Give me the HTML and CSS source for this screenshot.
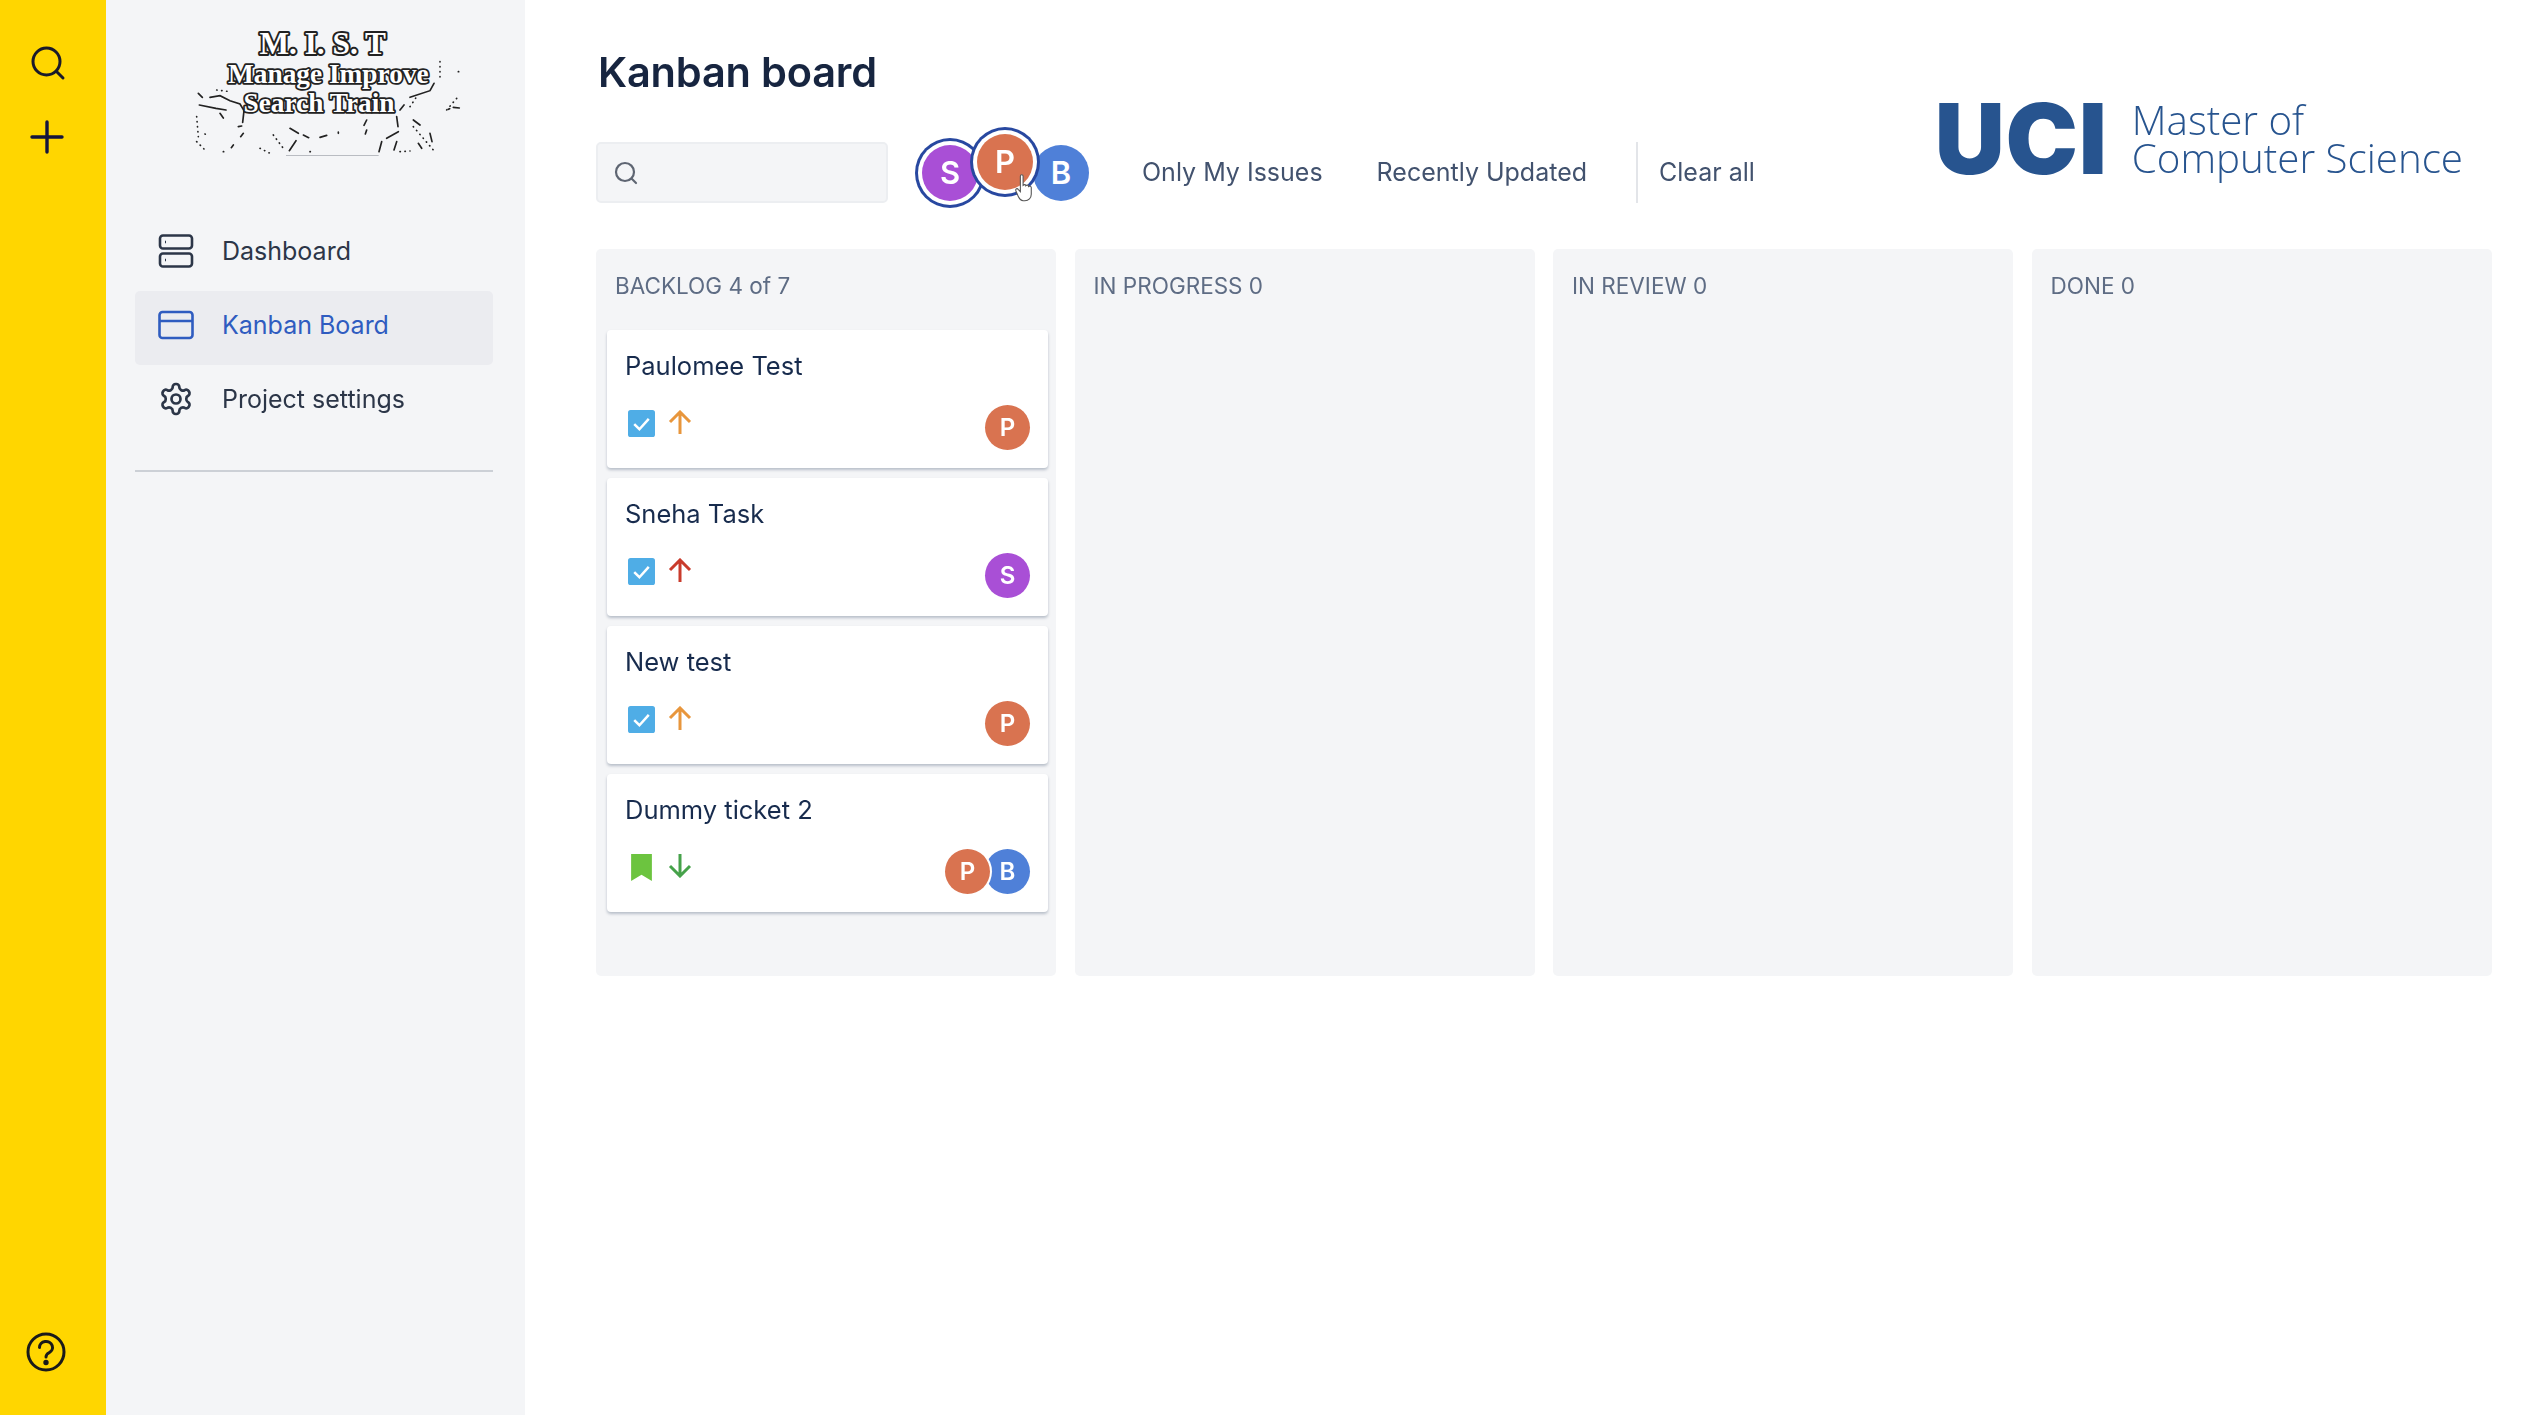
FILE: index.html
```html
<!DOCTYPE html>
<html lang="en">
<head>
<meta charset="utf-8">
<title>Kanban board</title>
<link rel="stylesheet" href="styles.css">
</head>
<body>
<div class="app">
  <aside class="rail">
    <div class="rail-top">
      <svg class="rail-icon" viewBox="0 0 36 36" fill="none" stroke="#1a1a2a" stroke-width="3" stroke-linecap="round"><circle cx="16.5" cy="16.5" r="13.5"/><path d="M27 27l6 6"/></svg>
      <svg class="rail-icon" viewBox="0 0 36 36" fill="none" stroke="#14143c" stroke-width="3.4" stroke-linecap="round"><path d="M17 3v30M2 18h30"/></svg>
    </div>
    <svg class="rail-help" viewBox="0 0 40 40" fill="none" stroke="#1a1a1a" stroke-width="3" stroke-linecap="round"><circle cx="20" cy="20" r="18"/><path d="M13.5 15.5a6.5 6 0 1 1 9.5 5.3c-2 1.1-3 2.2-3 4.2"/><circle cx="20" cy="30.5" r="1.2" fill="#1a1a1a"/></svg>
  </aside>

  <nav class="sidebar">
    <svg class="brand" viewBox="0 0 930 480">
      <g class="brand-specks" fill="none" stroke="#222" stroke-linecap="round">
        <path stroke-width="5" d="M85 250l12 12M88 285l50 10 30 5M120 262l30-5 30 15 30 10 12 20-4 35M150 310l10 14M205 350l10-2M220 370l-8 10M190 405l-6 8M360 355l25 15M378 392l-20 30M400 375l16 8M450 382l20-6M505 366v4M590 330l-8 16M590 360l-4 12M635 395l-8 30M650 385l35-20M680 320l4 30M690 300l12-15M720 262l60-20 12-22M730 330l20 15M780 370l6 25M745 400l10 15M680 395l-8 25M850 292l18 2M835 298l4-2"/>
        <path stroke-width="5" stroke-dasharray="1 14" d="M80 320l5 60M105 372l2 2M80 395l30 30M140 240l40 5M160 425h4M270 415l30 15M310 375l30 40M420 425h2M690 425l30-2M730 350l60 70M810 155v50M865 185h2M860 265l-30 35M720 290l20-30"/>
      </g>
      <rect class="brand-rule" x="348" y="435" width="278" height="3"/>
      <g class="brand-text">
        <text x="458" y="131" class="brand-l1">M. I. S. T</text>
        <text x="475" y="220" class="brand-l2">Manage Improve</text>
        <text x="447" y="305" class="brand-l2">Search Train</text>
      </g>
    </svg>
    <ul class="nav">
      <li class="nav-item">
        <svg class="nav-icon" viewBox="0 0 36 36" fill="none" stroke="currentColor" stroke-width="2.6"><rect x="2" y="2.5" width="32" height="13" rx="3"/><rect x="2" y="20.5" width="32" height="13" rx="3"/><path d="M7 9h1M7 27h1"/></svg>
        <span>Dashboard</span>
      </li>
      <li class="nav-item is-active">
        <svg class="nav-icon" viewBox="0 0 36 36" fill="none" stroke="currentColor" stroke-width="2.6"><rect x="1.5" y="5" width="33" height="26" rx="3"/><path d="M1.5 14h33"/></svg>
        <span>Kanban Board</span>
      </li>
      <li class="nav-item">
        <svg class="nav-icon" viewBox="0 0 24 24" fill="none" stroke="currentColor" stroke-width="1.8" stroke-linecap="round" stroke-linejoin="round"><path d="M12.22 2h-.44a2 2 0 0 0-2 2v.18a2 2 0 0 1-1 1.73l-.43.25a2 2 0 0 1-2 0l-.15-.08a2 2 0 0 0-2.73.73l-.22.38a2 2 0 0 0 .73 2.73l.15.1a2 2 0 0 1 1 1.72v.51a2 2 0 0 1-1 1.74l-.15.09a2 2 0 0 0-.73 2.73l.22.38a2 2 0 0 0 2.73.73l.15-.08a2 2 0 0 1 2 0l.43.25a2 2 0 0 1 1 1.73V20a2 2 0 0 0 2 2h.44a2 2 0 0 0 2-2v-.18a2 2 0 0 1 1-1.73l.43-.25a2 2 0 0 1 2 0l.15.08a2 2 0 0 0 2.73-.73l.22-.39a2 2 0 0 0-.73-2.73l-.15-.08a2 2 0 0 1-1-1.74v-.5a2 2 0 0 1 1-1.74l.15-.09a2 2 0 0 0 .73-2.73l-.22-.38a2 2 0 0 0-2.73-.73l-.15.08a2 2 0 0 1-2 0l-.43-.25a2 2 0 0 1-1-1.73V4a2 2 0 0 0-2-2z"/><circle cx="12" cy="12" r="3"/></svg>
        <span>Project settings</span>
      </li>
    </ul>
    <hr class="nav-rule">
  </nav>

  <main class="main">
    <header class="header">
      <div class="header-left">
        <h1 class="title">Kanban board</h1>
        <div class="toolbar">
          <div class="search">
            <svg class="search-icon" viewBox="0 0 26 26" fill="none" stroke="#5e6572" stroke-width="2.2" stroke-linecap="round"><circle cx="12" cy="12" r="9"/><path d="M19 19l4 4"/></svg>
          </div>
          <div class="people">
            <span class="person ring av-purple">S</span>
            <span class="person ring raised av-orange">P</span>
            <span class="person av-blue">B</span>
            <svg class="cursor" viewBox="0 0 22 32"><path d="M7 3c0-2 3-2 3 0v10c1-1 3-1 3 .5 1-1 3-1 3 .8 1-.8 3-.3 3 1.200V23c0 4-3 7-7 7h-2c-3 0-4-2-5-4l-3-7c-.6-2 1.500-3 2.600-1.500L7 20z" fill="#fff" stroke="#555" stroke-width="1.200"/></svg>
          </div>
          <button class="link">Only My Issues</button>
          <button class="link">Recently Updated</button>
          <span class="tool-rule"></span>
          <button class="link">Clear all</button>
        </div>
      </div>
      <div class="uci">
        <span class="uci-mark">UCI</span>
        <div class="uci-text"><div>Master of</div><div>Computer Science</div></div>
      </div>
    </header>

    <section class="board">
      <div class="col">
        <h2 class="col-title">BACKLOG 4 of 7</h2>
        <article class="card">
          <p class="card-title">Paulomee Test</p>
          <div class="card-foot">
            <div class="card-icons">
              <svg class="type" viewBox="0 0 26 26"><rect width="26" height="26" rx="2.500" fill="#4fade6"/><path d="M6 13.500l5 5 9-10" fill="none" stroke="#fff" stroke-width="2.400"/></svg>
              <svg class="prio" viewBox="0 0 24 24" fill="none" stroke="#e8963c" stroke-width="3"><path d="M12 24V2M2 12L12 2l10 10"/></svg>
            </div>
            <div class="assignees"><span class="av av-orange">P</span></div>
          </div>
        </article>
        <article class="card">
          <p class="card-title">Sneha Task</p>
          <div class="card-foot">
            <div class="card-icons">
              <svg class="type" viewBox="0 0 26 26"><rect width="26" height="26" rx="2.500" fill="#4fade6"/><path d="M6 13.500l5 5 9-10" fill="none" stroke="#fff" stroke-width="2.400"/></svg>
              <svg class="prio" viewBox="0 0 24 24" fill="none" stroke="#c93b2c" stroke-width="3"><path d="M12 24V2M2 12L12 2l10 10"/></svg>
            </div>
            <div class="assignees"><span class="av av-purple">S</span></div>
          </div>
        </article>
        <article class="card">
          <p class="card-title">New test</p>
          <div class="card-foot">
            <div class="card-icons">
              <svg class="type" viewBox="0 0 26 26"><rect width="26" height="26" rx="2.500" fill="#4fade6"/><path d="M6 13.500l5 5 9-10" fill="none" stroke="#fff" stroke-width="2.400"/></svg>
              <svg class="prio" viewBox="0 0 24 24" fill="none" stroke="#e8963c" stroke-width="3"><path d="M12 24V2M2 12L12 2l10 10"/></svg>
            </div>
            <div class="assignees"><span class="av av-orange">P</span></div>
          </div>
        </article>
        <article class="card">
          <p class="card-title">Dummy ticket 2</p>
          <div class="card-foot">
            <div class="card-icons">
              <svg class="type" viewBox="0 0 26 26"><path d="M3 0h20v26l-10-6-10 6z" fill="#6cc43f"/></svg>
              <svg class="prio" viewBox="0 0 24 24" fill="none" stroke="#46a24a" stroke-width="3"><path d="M12 0v22M2 12l10 10 10-10"/></svg>
            </div>
            <div class="assignees"><span class="av av-orange av-front">P</span><span class="av av-blue av-back">B</span></div>
          </div>
        </article>
      </div>
      <div class="col"><h2 class="col-title">IN PROGRESS 0</h2></div>
      <div class="col"><h2 class="col-title">IN REVIEW 0</h2></div>
      <div class="col"><h2 class="col-title">DONE 0</h2></div>
    </section>
  </main>
</div>
</body>
</html>
```
FILE: styles.css
```css
* { box-sizing: border-box; }
html, body { margin: 0; height: 100%; background: #fff; }
body { font-family: Inter, "Noto Sans", sans-serif; color: #172b4d; overflow: hidden; }
.app { display: flex; height: 1415px; filter: blur(.55px); }

.rail { width: 106px; flex: none; background: #ffd600; display: flex; flex-direction: column; justify-content: space-between; padding: 45px 0 43px; }
.rail-top { display: flex; flex-direction: column; gap: 38px; padding-left: 30px; }
.rail-icon { width: 36px; height: 36px; display: block; }
.rail-help { width: 40px; height: 40px; margin-left: 26px; display: block; }

.sidebar { width: 419px; flex: none; background: #f4f5f7; padding: 10px 32px 0 29px; }
.brand { display: block; width: 310px; height: 160px; margin-left: 35px; }
.brand-text { text-anchor: middle; font-family: "Liberation Serif", serif; font-weight: 700; fill: #fff; stroke: #222; paint-order: stroke; stroke-linejoin: round; }
.brand-l1 { font-size: 94px; stroke-width: 12px; }
.brand-l2 { font-size: 82px; stroke-width: 11px; }
.brand-rule { fill: #b9bcc2; }
.nav { list-style: none; margin: 47px 0 0; padding: 0; }
.nav-item { height: 74px; display: flex; align-items: center; gap: 28px; padding: 0 0 6px 23px; border-radius: 5px; font-size: 25px; color: #2c3648; }
.nav-item.is-active { background: #ebecf0; color: #2f5cc0; }
.nav-icon { width: 36px; height: 36px; flex: none; }
.nav-rule { border: 0; height: 2px; background: #ccd0d6; margin: 31px 0 0; }

.main { flex: 1; min-width: 0; padding: 47px 32px 0 71px; }
.header { display: flex; justify-content: space-between; align-items: flex-start; }
.title { margin: 0 0 0 2px; font-size: 41.500px; line-height: 50px; font-weight: 600; color: #172540; letter-spacing: -.2px; }
.toolbar { display: flex; align-items: center; height: 61px; margin-top: 45px; }
.search { width: 292px; height: 61px; background: #f4f5f7; border: 2px solid #eceef1; border-radius: 5px; display: flex; align-items: center; padding-left: 15px; }
.search-icon { width: 26px; height: 26px; }
.people { position: relative; display: flex; align-items: center; margin-left: 26px; width: 228px; }
.person { width: 56px; height: 56px; border-radius: 50%; display: flex; align-items: center; justify-content: center; color: #fff; font-size: 31px; font-weight: 600; flex: none; }
.ring { box-shadow: 0 0 0 4px #fff, 0 0 0 7px #2848a0; position: relative; }
.person.av-purple { margin-left: 8px; z-index: 1; }
.raised { transform: translateY(-11px); z-index: 2; }
.person.raised { margin-left: -1px; }
.person.av-blue { margin-left: 0; }
.cursor { position: absolute; left: 100px; top: 28px; width: 20px; height: 30px; z-index: 3; }
.link { border: 0; background: none; padding: 0 0 2px; font: inherit; font-size: 25px; color: #42526e; margin-right: 54px; white-space: nowrap; }
.tool-rule { width: 2px; height: 61px; background: #e3e5e9; margin: 0 21px 0 -5px; }
.uci { display: flex; align-items: center; gap: 24px; margin: 48px 28px 0 0; color: #27548f; }
.uci-mark { font-family: Inter, sans-serif; font-weight: 900; font-size: 97px; line-height: 88px; letter-spacing: .8px; }
.uci-text { font-family: "Open Sans", sans-serif; font-weight: 300; font-size: 40.300px; }
.uci-text div { height: 38px; line-height: 38px; white-space: nowrap; }

.board { display: grid; grid-template-columns: repeat(4, 460px); gap: 18.500px; margin-top: 46px; }
.col { height: 727px; background: #f4f5f7; border-radius: 5px; padding: 0 8px 0 11px; }
.col-title { margin: 0; height: 80.500px; padding: 24px 0 0 8px; font-size: 22.500px; line-height: 26px; font-weight: 400; color: #5e6c84; }
.card { height: 138px; margin-bottom: 10px; background: #fff; border-radius: 4px; box-shadow: 0 2px 3px rgba(9,30,66,.25); padding: 21px 18px 18px 18px; display: flex; flex-direction: column; justify-content: space-between; }
.card-title { margin: 0; font-size: 25.500px; line-height: 30px; color: #172b4d; }
.card-foot { display: flex; justify-content: space-between; align-items: flex-end; }
.card-icons { display: flex; gap: 13px; align-items: flex-start; margin: 0 0 13px 3px; }
.type { width: 27px; height: 27px; display: block; }
.prio { width: 24px; height: 24px; display: block; }
.assignees { display: flex; }
.av { width: 45px; height: 45px; border-radius: 50%; display: flex; align-items: center; justify-content: center; color: #fff; font-size: 24px; font-weight: 600; }
.av-front { position: relative; z-index: 1; box-shadow: 0 0 0 2px #fff; }
.av-back { margin-left: -5px; }
.av-orange { background: #d97350; }
.av-purple { background: #a94fd6; }
.av-blue { background: #4f80d8; }
```
